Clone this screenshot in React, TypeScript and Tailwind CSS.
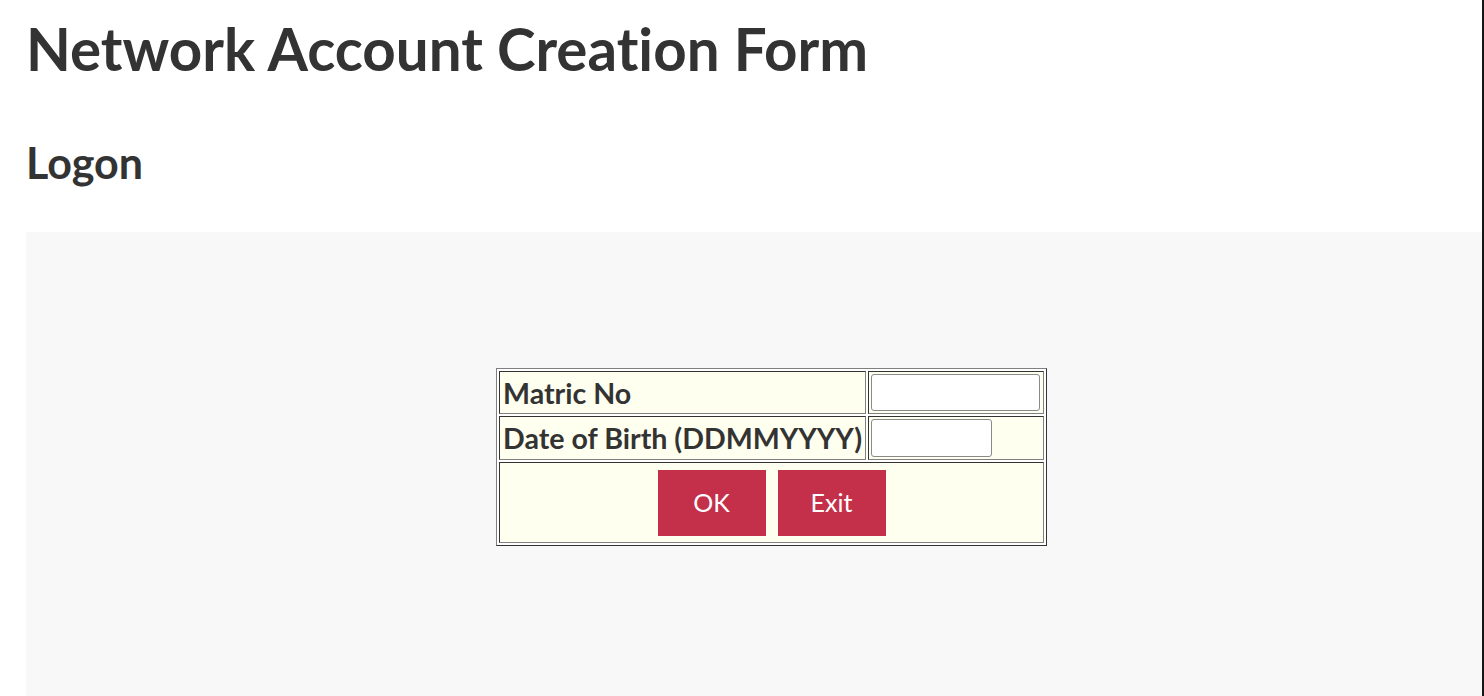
import React from "react";

export default function App() {
  return (
    <div className="flex min-h-[696px] w-[1484px] bg-white font-['Lato',sans-serif] text-[#333333] [font-variant-ligatures:none]">
      <div className="flex w-[1482px] flex-col">
        <h1 className="ml-[26px] mt-[13px] text-[58.3px] font-bold leading-[70px]">
          Network Account Creation Form
        </h1>
        <h2 className="ml-[26px] mt-[53px] text-[43px] font-bold leading-[54px]">Logon</h2>
        <div className="ml-[26px] mt-[42px] h-[464px] w-[1456px] bg-[#f8f8f8] pl-[470px] pt-[136px]">
          <table className="border-separate border-spacing-[2px] border border-t-[#808080] border-l-[#808080] border-b-[#333] border-r-[#333] bg-white">
            <tbody>
              <tr>
                <td className="h-[43px] border border-t-[#333] border-l-[#333] border-b-[#808080] border-r-[#808080] bg-[#fffff0] px-[3px] align-middle text-[28.6px] font-bold leading-[34px] whitespace-nowrap">
                  Matric No
                </td>
                <td className="w-[176px] border border-t-[#333] border-l-[#333] border-b-[#808080] border-r-[#808080] bg-[#fffff0] px-[2px] align-middle">
                  <input
                    type="text"
                    className="block h-[37px] w-[169px] rounded-[3px] border border-[#8a8a8a] bg-white"
                  />
                </td>
              </tr>
              <tr>
                <td className="h-[44px] border border-t-[#333] border-l-[#333] border-b-[#808080] border-r-[#808080] bg-[#fffff0] px-[3px] align-middle text-[28.6px] font-bold leading-[34px] whitespace-nowrap">
                  Date of Birth (DDMMYYYY)
                </td>
                <td className="border border-t-[#333] border-l-[#333] border-b-[#808080] border-r-[#808080] bg-[#fffff0] px-[2px] align-middle">
                  <input
                    type="text"
                    className="block h-[38px] w-[121px] rounded-[3px] border border-[#8a8a8a] bg-white"
                  />
                </td>
              </tr>
              <tr>
                <td
                  colSpan={2}
                  className="h-[81px] border border-t-[#333] border-l-[#333] border-b-[#808080] border-r-[#808080] bg-[#fffff0] align-middle"
                >
                  <div className="flex justify-center gap-[12px]">
                    <button className="h-[66px] w-[108px] bg-[#c4304a] text-[25px] text-white">OK</button>
                    <button className="h-[66px] w-[108px] bg-[#c4304a] text-[25px] text-white">Exit</button>
                  </div>
                </td>
              </tr>
            </tbody>
          </table>
        </div>
      </div>
      <div className="w-[2px] bg-[#161616]" />
    </div>
  );
}
